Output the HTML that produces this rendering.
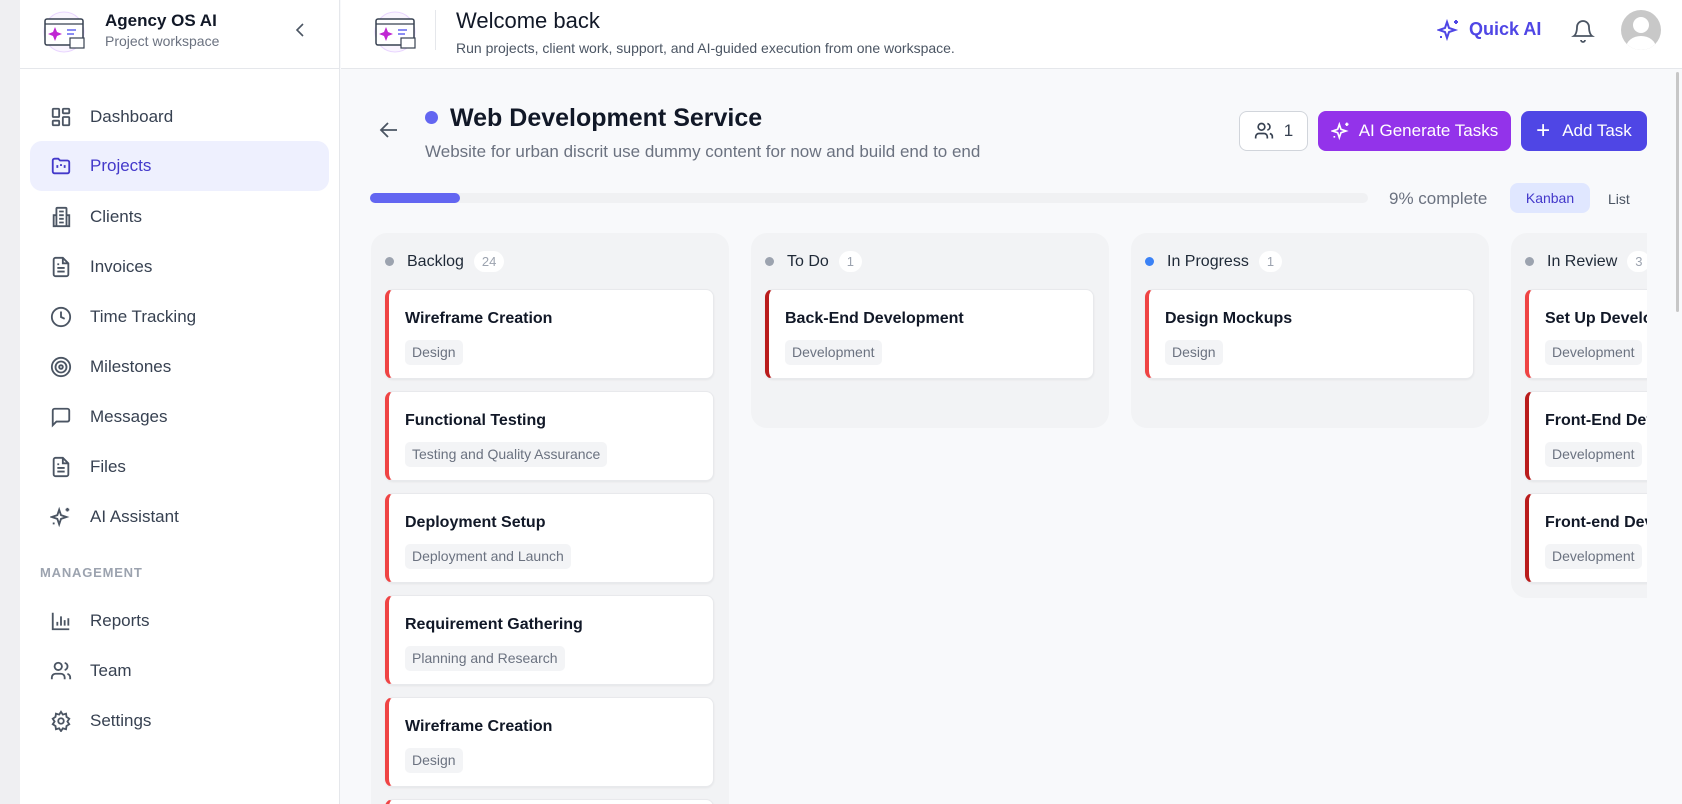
<!DOCTYPE html>
<html><head><meta charset="utf-8"><style>
*{box-sizing:border-box;margin:0;padding:0}
html{overflow:hidden;width:1682px;height:804px}
body{width:1682px;height:804px;overflow:hidden;background:#f8f9fb;font-family:"Liberation Sans",sans-serif;position:relative;color:#111827}
.strip{position:absolute;left:0;top:0;width:20px;height:804px;background:#efeff2}
.side{position:absolute;left:20px;top:0;width:320px;height:804px;background:#fff;border-right:1px solid #e5e7eb}
.side .hd{height:69px;border-bottom:1px solid #e5e7eb;position:relative}
.abs{position:absolute}
.nav{position:absolute;left:10px;width:299px;height:50px;border-radius:12px;display:flex;align-items:center;font-size:17px;color:#374151}
.nav svg{position:absolute;left:20px;top:14px}
.nav span{position:absolute;left:60px}
.nav.act{background:#eef0fe;color:#4338ca}
.top{position:absolute;left:341px;top:0;width:1341px;height:69px;background:#fff;border-bottom:1px solid #e5e7eb}
.col{position:absolute;top:233px;width:358px;background:#f2f3f5;border-radius:16px}
.ch{position:absolute;top:18px;left:14px;display:flex;align-items:center;font-size:16px;color:#1f2937}
.ch i{width:9px;height:9px;border-radius:50%;background:#9ca3af;margin-right:13px;display:inline-block}
.ch b{font-weight:normal;margin-left:10px;background:#fff;border-radius:12px;font-size:13px;color:#9ca3af;padding:3px 8px}
.card{position:absolute;left:14px;width:329px;height:90px;background:#fff;border-radius:8px;border:1px solid #e8e9ec;border-left:4px solid #ef4444;box-shadow:0 1px 2px rgba(0,0,0,.06)}
.card.dk{border-left-color:#b91c1c}
.card .t{position:absolute;left:16px;top:20px;font-size:16px;font-weight:bold;color:#111827;white-space:nowrap}
.card .g{position:absolute;left:16px;top:50px;height:25px;line-height:25px;padding:0 7px;background:#f3f4f6;border-radius:5px;font-size:14px;color:#6b7280;white-space:nowrap}
.btn{position:absolute;top:111px;height:40px;border-radius:8px;display:flex;align-items:center;justify-content:center;font-size:17px;color:#fff}
</style></head><body>
<div class="strip"></div>
<div class="side">
 <div class="hd">
  <svg class="abs" style="left:22px;top:10px" width="48" height="44" viewBox="0 0 48 44"><circle cx="22" cy="22" r="20" fill="#faf5ff" stroke="#e9d5ff"/><rect x="3" y="9" width="38" height="26" rx="2" fill="#fff" stroke="#374151" stroke-width="1.5"/><line x1="3" y1="14" x2="41" y2="14" stroke="#374151" stroke-width="1.2"/><path d="M13 17 L15 22 L20 24 L15 26 L13 31 L11 26 L6 24 L11 22Z" fill="#c026d3"/><line x1="25" y1="20" x2="34" y2="20" stroke="#6366f1" stroke-width="1.5"/><line x1="25" y1="24" x2="32" y2="24" stroke="#6366f1" stroke-width="1.5"/><rect x="28" y="28" width="14" height="10" fill="#fff" stroke="#374151" stroke-width="1.2"/></svg>
  <div class="abs" style="left:85px;top:11px;font-size:17px;font-weight:bold;color:#111827">Agency OS AI</div>
  <div class="abs" style="left:85px;top:33px;font-size:14px;color:#6b7280">Project workspace</div>
  <svg class="abs" style="left:274px;top:22px" width="14" height="16" viewBox="0 0 14 16"><path d="M9 2 L3 8 L9 14" fill="none" stroke="#4b5563" stroke-width="1.6"/></svg>
 </div>
 <div class="nav" style="top:92px"><svg width="22" height="22" viewBox="0 0 24 24" fill="none" stroke="#4b5563" stroke-width="2"><rect x="3" y="3" width="7" height="9" rx="1"/><rect x="14" y="3" width="7" height="5" rx="1"/><rect x="14" y="12" width="7" height="9" rx="1"/><rect x="3" y="16" width="7" height="5" rx="1"/></svg><span>Dashboard</span></div>
 <div class="nav act" style="top:141px"><svg width="22" height="22" viewBox="0 0 24 24" fill="none" stroke="#4338ca" stroke-width="2"><path d="M3 6a2 2 0 0 1 2-2h4l2 2h8a2 2 0 0 1 2 2v10a2 2 0 0 1-2 2H5a2 2 0 0 1-2-2z"/><path d="M8 11v3M12 10v2M16 11v3"/></svg><span>Projects</span></div>
 <div class="nav" style="top:192px"><svg width="22" height="22" viewBox="0 0 24 24" fill="none" stroke="#4b5563" stroke-width="2"><rect x="7" y="2" width="11" height="20" rx="1"/><path d="M7 10H4v12h3M18 10h3v12h-3M10 6h5M10 10h5M10 14h5M10 18h5"/></svg><span>Clients</span></div>
 <div class="nav" style="top:242px"><svg width="22" height="22" viewBox="0 0 24 24" fill="none" stroke="#4b5563" stroke-width="2"><path d="M14 2H6a2 2 0 0 0-2 2v16a2 2 0 0 0 2 2h12a2 2 0 0 0 2-2V8z"/><path d="M14 2v6h6M8 13h8M8 17h8M8 9h2"/></svg><span>Invoices</span></div>
 <div class="nav" style="top:292px"><svg width="22" height="22" viewBox="0 0 24 24" fill="none" stroke="#4b5563" stroke-width="2"><circle cx="12" cy="12" r="10"/><path d="M12 6v6l4 2"/></svg><span>Time Tracking</span></div>
 <div class="nav" style="top:342px"><svg width="22" height="22" viewBox="0 0 24 24" fill="none" stroke="#4b5563" stroke-width="2"><circle cx="12" cy="12" r="10"/><circle cx="12" cy="12" r="6"/><circle cx="12" cy="12" r="2"/></svg><span>Milestones</span></div>
 <div class="nav" style="top:392px"><svg width="22" height="22" viewBox="0 0 24 24" fill="none" stroke="#4b5563" stroke-width="2"><path d="M21 15a2 2 0 0 1-2 2H7l-4 4V5a2 2 0 0 1 2-2h14a2 2 0 0 1 2 2z"/></svg><span>Messages</span></div>
 <div class="nav" style="top:442px"><svg width="22" height="22" viewBox="0 0 24 24" fill="none" stroke="#4b5563" stroke-width="2"><path d="M14 2H6a2 2 0 0 0-2 2v16a2 2 0 0 0 2 2h12a2 2 0 0 0 2-2V8z"/><path d="M14 2v6h6M8 13h8M8 17h8M8 9h2"/></svg><span>Files</span></div>
 <div class="nav" style="top:492px"><svg width="22" height="22" viewBox="0 0 24 24" fill="none" stroke="#4b5563" stroke-width="2"><path d="M10 4l2 6 6 2-6 2-2 6-2-6-6-2 6-2z"/><path d="M19 2v4M17 4h4M4 18v2"/></svg><span>AI Assistant</span></div>
 <div class="abs" style="left:20px;top:565px;font-size:13px;letter-spacing:.8px;color:#9ca3af;font-weight:bold">MANAGEMENT</div>
 <div class="nav" style="top:596px"><svg width="22" height="22" viewBox="0 0 24 24" fill="none" stroke="#4b5563" stroke-width="2"><path d="M3 3v18h18M8 17v-4M12 17V7M16 17v-6M20 17V9"/></svg><span>Reports</span></div>
 <div class="nav" style="top:646px"><svg width="22" height="22" viewBox="0 0 24 24" fill="none" stroke="#4b5563" stroke-width="2"><circle cx="9" cy="7" r="4"/><path d="M2 21v-2a4 4 0 0 1 4-4h6a4 4 0 0 1 4 4v2M16 3.1a4 4 0 0 1 0 7.8M22 21v-2a4 4 0 0 0-3-3.9"/></svg><span>Team</span></div>
 <div class="nav" style="top:696px"><svg width="22" height="22" viewBox="0 0 24 24" fill="none" stroke="#4b5563" stroke-width="2"><circle cx="12" cy="12" r="3"/><path d="M12 2l2 3 3.5-1 .5 3.5 3 2-2 3 2 3-3 2-.5 3.5-3.5-1-2 3-2-3-3.5 1-.5-3.5-3-2 2-3-2-3 3-2 .5-3.5 3.5 1z"/></svg><span>Settings</span></div>
</div>
<div class="top">
  <svg class="abs" style="left:32px;top:10px" width="48" height="44" viewBox="0 0 48 44"><circle cx="22" cy="22" r="20" fill="#faf5ff" stroke="#e9d5ff"/><rect x="3" y="9" width="38" height="26" rx="2" fill="#fff" stroke="#374151" stroke-width="1.5"/><line x1="3" y1="14" x2="41" y2="14" stroke="#374151" stroke-width="1.2"/><path d="M13 17 L15 22 L20 24 L15 26 L13 31 L11 26 L6 24 L11 22Z" fill="#c026d3"/><line x1="25" y1="20" x2="34" y2="20" stroke="#6366f1" stroke-width="1.5"/><line x1="25" y1="24" x2="32" y2="24" stroke="#6366f1" stroke-width="1.5"/><rect x="28" y="28" width="14" height="10" fill="#fff" stroke="#374151" stroke-width="1.2"/></svg>
  <div class="abs" style="left:94px;top:10px;width:1px;height:40px;background:#e5e7eb"></div>
  <div class="abs" style="left:115px;top:8px;font-size:22px;color:#111827">Welcome back</div>
  <div class="abs" style="left:115px;top:40px;font-size:14px;color:#4b5563">Run projects, client work, support, and AI-guided execution from one workspace.</div>
  <svg class="abs" style="left:1096px;top:18px" width="24" height="24" viewBox="0 0 24 24" fill="none" stroke="#4f46e5" stroke-width="2"><path d="M10 4l2 6 6 2-6 2-2 6-2-6-6-2 6-2z"/><path d="M19 2v4M17 4h4M4 18v2"/></svg>
  <div class="abs" style="left:1128px;top:19px;font-size:18px;font-weight:bold;color:#4f46e5">Quick AI</div>
  <svg class="abs" style="left:1230px;top:17px" width="24" height="26" viewBox="0 0 24 26" fill="none" stroke="#4b5563" stroke-width="1.8"><path d="M6 10a6 6 0 0 1 12 0c0 7 3 9 3 9H3s3-2 3-9M10 23a2 2 0 0 0 4 0"/></svg>
  <div class="abs" style="left:1280px;top:10px;width:40px;height:40px;border-radius:50%;background:#c8c8c8;overflow:hidden"><div class="abs" style="left:12px;top:7px;width:16px;height:16px;border-radius:50%;background:#fff"></div><div class="abs" style="left:5px;top:26px;width:30px;height:24px;border-radius:50%;background:#fff"></div></div>
</div>
<div class="abs" style="left:1669px;top:70px;width:13px;height:734px;background:#f8f9fb"></div>
<div class="abs" style="left:1676px;top:72px;width:3px;height:240px;background:#c7c7c7;border-radius:2px"></div>
<svg class="abs" style="left:378px;top:120px" width="22" height="20" viewBox="0 0 22 20" fill="none" stroke="#4b5563" stroke-width="1.8"><path d="M19 10H3M10 3L3 10l7 7"/></svg>
<div class="abs" style="left:425px;top:111px;width:13px;height:13px;border-radius:50%;background:#6366f1"></div>
<div class="abs" style="left:450px;top:104px;font-size:25px;font-weight:bold;color:#111827">Web Development Service</div>
<div class="abs" style="left:425px;top:142px;font-size:17px;color:#6b7280">Website for urban discrit use dummy content for now and build end to end</div>
<div class="btn" style="left:1239px;width:69px;background:#fff;border:1px solid #d1d5db;color:#374151"><svg width="20" height="20" viewBox="0 0 24 24" fill="none" stroke="#374151" stroke-width="2" style="margin-right:10px"><circle cx="9" cy="7" r="4"/><path d="M2 21v-2a4 4 0 0 1 4-4h6a4 4 0 0 1 4 4v2M16 3.1a4 4 0 0 1 0 7.8M22 21v-2a4 4 0 0 0-3-3.9"/></svg>1</div>
<div class="btn" style="left:1318px;width:193px;background:#9333ea"><svg width="20" height="20" viewBox="0 0 24 24" fill="none" stroke="#fff" stroke-width="2" style="margin-right:8px"><path d="M10 4l2 6 6 2-6 2-2 6-2-6-6-2 6-2z"/><path d="M19 2v4M17 4h4M4 18v2"/></svg>AI Generate Tasks</div>
<div class="btn" style="left:1521px;width:126px;background:#4f46e5"><span style="font-size:24px;margin-right:12px;font-weight:300;line-height:1">+</span>Add Task</div>
<div class="abs" style="left:370px;top:193px;width:998px;height:10px;background:#f0f1f3;border-radius:5px"><div style="width:90px;height:10px;background:#6366f1;border-radius:5px"></div></div>
<div class="abs" style="left:1389px;top:189px;font-size:17px;color:#6b7280">9% complete</div>
<div class="abs" style="left:1510px;top:183px;width:80px;height:30px;background:#e0e7ff;border-radius:8px;font-size:14px;color:#4338ca;text-align:center;line-height:30px">Kanban</div>
<div class="abs" style="left:1608px;top:191px;font-size:14px;color:#4b5563">List</div>
<div class="abs" style="left:340px;top:220px;width:1307px;height:584px;overflow:hidden">
 <div class="col" style="left:31px;top:13px;height:600px"><div class="ch"><i></i>Backlog<b>24</b></div>
  <div class="card" style="top:56px"><div class="t">Wireframe Creation</div><div class="g">Design</div></div>
  <div class="card" style="top:158px"><div class="t">Functional Testing</div><div class="g">Testing and Quality Assurance</div></div>
  <div class="card" style="top:260px"><div class="t">Deployment Setup</div><div class="g">Deployment and Launch</div></div>
  <div class="card" style="top:362px"><div class="t">Requirement Gathering</div><div class="g">Planning and Research</div></div>
  <div class="card" style="top:464px"><div class="t">Wireframe Creation</div><div class="g">Design</div></div>
  <div class="card" style="top:566px"><div class="t"></div></div>
 </div>
 <div class="col" style="left:411px;top:13px;height:195px"><div class="ch"><i></i>To Do<b>1</b></div>
  <div class="card dk" style="top:56px"><div class="t">Back-End Development</div><div class="g">Development</div></div></div>
 <div class="col" style="left:791px;top:13px;height:195px"><div class="ch"><i style="background:#3b82f6"></i>In Progress<b>1</b></div>
  <div class="card" style="top:56px"><div class="t">Design Mockups</div><div class="g">Design</div></div></div>
 <div class="col" style="left:1171px;top:13px;height:365px"><div class="ch"><i></i>In Review<b>3</b></div>
  <div class="card" style="top:56px"><div class="t">Set Up Development Environment</div><div class="g">Development</div></div>
  <div class="card dk" style="top:158px"><div class="t">Front-End Development</div><div class="g">Development</div></div>
  <div class="card dk" style="top:260px"><div class="t">Front-end Development</div><div class="g">Development</div></div></div>
</div>
</body></html>
